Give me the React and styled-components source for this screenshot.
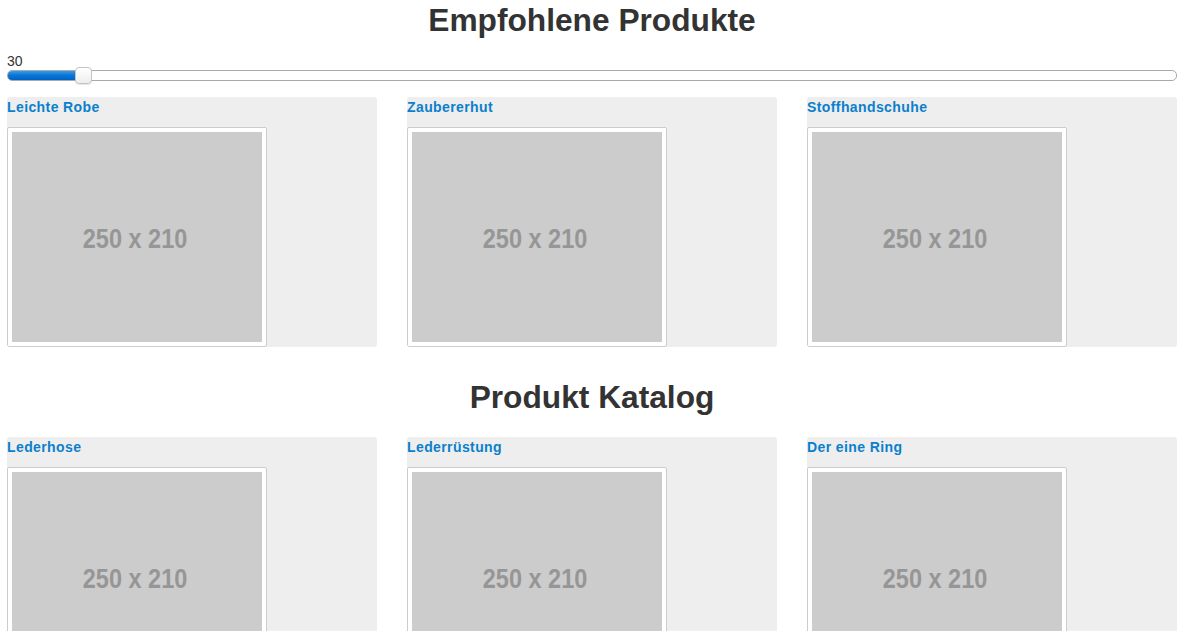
import React from 'react';
import styled, { createGlobalStyle } from 'styled-components';

const GlobalStyle = createGlobalStyle`
  body {
    margin: 0;
    background: #fff;
    font-family: "Liberation Sans", Arial, sans-serif;
    color: #333;
  }
`;

const Page = styled.div`
  padding: 0 22px 0 7px;
`;

const Heading = styled.h1`
  margin: 0;
  height: 40px;
  line-height: 40px;
  font-size: 31.7px;
  font-weight: bold;
  text-align: center;
  color: #333;
`;

const SectionHeading = styled(Heading)`
  margin-top: 30px;
  margin-bottom: 20px;
`;

const SliderLabel = styled.div`
  margin-top: 14px;
  font-size: 14px;
  line-height: 15px;
  color: #333;
`;

const Track = styled.div`
  position: relative;
  margin-top: 1px;
  height: 9px;
  border: 1px solid #aaa;
  border-radius: 5px;
  background: #fff;
`;

const Fill = styled.div`
  height: 100%;
  border-radius: 4px 0 0 4px;
  background: linear-gradient(to bottom, #3c9ae6 0%, #0a78d8 45%, #0062c4 100%);
`;

const Thumb = styled.div`
  position: absolute;
  top: -4px;
  width: 15px;
  height: 15px;
  margin-left: -8px;
  border: 1px solid #c5c5c5;
  border-radius: 4px;
  background: linear-gradient(to bottom, #fff, #ededed);
  box-shadow: 0 1px 1px rgba(0, 0, 0, 0.1);
`;

const Grid = styled.div`
  display: grid;
  grid-template-columns: repeat(3, 370px);
  column-gap: 30px;
  margin-top: ${(p) => p.$top}px;
`;

const Card = styled.div`
  height: 250px;
  background: #eee;
  border-radius: 3px;
  overflow: hidden;
`;

const CardTitle = styled.div`
  height: 30px;
  line-height: 21px;
  font-size: 14px;
  letter-spacing: 0.4px;
  font-weight: bold;
  color: #0a80cc;
`;

const Thumbnail = styled.div`
  width: 250px;
  padding: 4px;
  background: #fff;
  border: 1px solid #ccc;
  border-radius: 2px;
`;

const Placeholder = styled.div`
  height: 210px;
  display: flex;
  align-items: center;
  justify-content: center;
  background: #ccc;
`;

const PlaceholderText = styled.span`
  display: inline-block;
  color: #969696;
  font-family: "Liberation Sans", Arial, sans-serif;
  font-weight: bold;
  font-size: 27px;
  transform: scaleX(0.87);
  margin: 4px 4px 0 0;
`;

const Slider = ({ value, min, max }) => {
  const pct = ((value - min) / (max - min)) * 100;
  return (
    <>
      <SliderLabel>{value}</SliderLabel>
      <Track>
        <Fill style={{ width: `${pct}%` }} />
        <Thumb style={{ left: `${pct}%` }} />
      </Track>
    </>
  );
};

const ProductCard = ({ name }) => (
  <Card>
    <CardTitle>{name}</CardTitle>
    <Thumbnail>
      <Placeholder>
        <PlaceholderText>250 x 210</PlaceholderText>
      </Placeholder>
    </Thumbnail>
  </Card>
);

const featured = ['Leichte Robe', 'Zaubererhut', 'Stoffhandschuhe'];
const catalog = ['Lederhose', 'Lederrüstung', 'Der eine Ring'];

export default function App() {
  return (
    <Page>
      <GlobalStyle />
      <Heading>Empfohlene Produkte</Heading>
      <Slider value={30} min={0} max={470} />
      <Grid $top={16}>
        {featured.map((n) => <ProductCard key={n} name={n} />)}
      </Grid>
      <SectionHeading>Produkt Katalog</SectionHeading>
      <Grid $top={0}>
        {catalog.map((n) => <ProductCard key={n} name={n} />)}
      </Grid>
    </Page>
  );
}
